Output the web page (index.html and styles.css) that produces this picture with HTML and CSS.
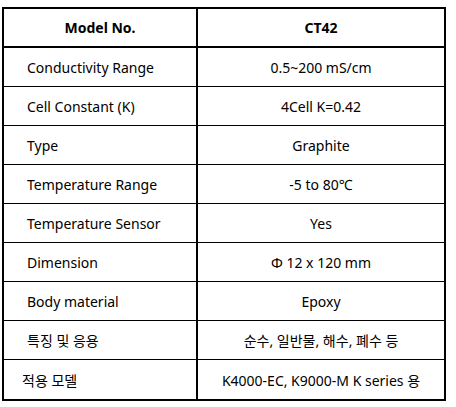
FILE: index.html
```html
<!DOCTYPE html>
<html lang="ko">
<head>
    <meta charset="UTF-8">
    <title>CT42 Specifications</title>
    <link rel="stylesheet" href="styles.css">
</head>
<body>
    <div class="spec-wrap">
        <table class="spec-table">
            <thead>
                <tr>
                    <th>Model No.</th>
                    <th>CT42</th>
                </tr>
            </thead>
            <tbody>
                <tr><td>Conductivity Range</td><td>0.5~200 mS/cm</td></tr>
                <tr><td>Cell Constant (K)</td><td>4Cell K=0.42</td></tr>
                <tr><td>Type</td><td>Graphite</td></tr>
                <tr><td>Temperature Range</td><td>-5 to 80℃</td></tr>
                <tr><td>Temperature Sensor</td><td>Yes</td></tr>
                <tr><td>Dimension</td><td>Φ 12 x 120 mm</td></tr>
                <tr><td>Body material</td><td>Epoxy</td></tr>
                <tr><td>특징 및 응용</td><td>순수, 일반물, 해수, 폐수 등</td></tr>
                <tr class="last"><td class="tight">적용 모델</td><td>K4000-EC, K9000-M K series 용</td></tr>
            </tbody>
        </table>
    </div>
</body>
</html>
```

FILE: styles.css
```css
body {
    margin: 0;
    background: #fff;
    font-family: "Noto Sans", "Noto Sans CJK KR", sans-serif;
    font-size: 14px;
    color: #000;
}

.spec-wrap {
    padding: 7px 0 0 2px;
}

.spec-table {
    width: 444px;
    table-layout: fixed;
    border: 2px solid #000;
    border-collapse: separate;
    border-spacing: 0;
}

.spec-table th,
.spec-table td {
    box-sizing: border-box;
    padding: 0;
    height: 39px;
    border-bottom: 1px solid #000;
    text-align: center;
    font-weight: normal;
}

.spec-table th {
    height: 39px;
    font-weight: bold;
    border-bottom-width: 2px;
}

.spec-table th:first-child {
    width: 194px;
}

.spec-table th:first-child,
.spec-table td:first-child {
    border-right: 2px solid #000;
}

.spec-table td:first-child {
    text-align: left;
    padding-left: 23px;
}

.spec-table td.tight {
    padding-left: 18px;
}

.spec-table tr.last td {
    border-bottom: none;
}
```
